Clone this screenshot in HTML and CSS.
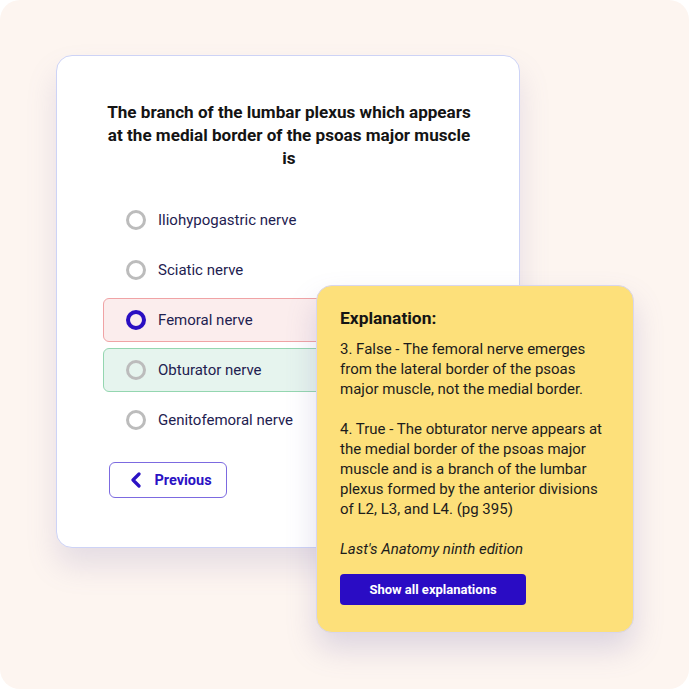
FILE: index.html
```html
<!DOCTYPE html>
<html>
<head>
<meta charset="utf-8">
<link rel="stylesheet" href="styles.css">
</head>
<body>
<div class="frame">
  <div class="quiz-card">
    <h1 class="question">The branch of the lumbar plexus which appears at the medial border of the psoas major muscle is</h1>
    <ul class="options">
      <li class="option"><span class="radio"></span><span class="label">Iliohypogastric nerve</span></li>
      <li class="option"><span class="radio"></span><span class="label">Sciatic nerve</span></li>
      <li class="option wrong"><span class="radio selected"></span><span class="label">Femoral nerve</span></li>
      <li class="option right"><span class="radio"></span><span class="label">Obturator nerve</span></li>
      <li class="option"><span class="radio"></span><span class="label">Genitofemoral nerve</span></li>
    </ul>
    <button class="prev-btn">
      <svg width="12" height="16" viewBox="0 0 12 16"><path d="M9 2 L3 8 L9 14" fill="none" stroke="#2b12c4" stroke-width="3.2" stroke-linecap="round" stroke-linejoin="round"/></svg>
      <span>Previous</span>
    </button>
  </div>
  <div class="explain-card">
    <h2 class="explain-title">Explanation:</h2>
    <p class="explain-text">3. False - The femoral nerve emerges from the lateral border of the psoas major muscle, not the medial border.</p>
    <p class="explain-text">4. True - The obturator nerve appears at the medial border of the psoas major muscle and is a branch of the lumbar plexus formed by the anterior divisions of L2, L3, and L4. (pg 395)</p>
    <p class="explain-text source">Last's Anatomy ninth edition</p>
    <button class="show-btn">Show all explanations</button>
  </div>
</div>
</body>
</html>
```

FILE: styles.css
```css
html, body {
  margin: 0;
  padding: 0;
  background: #ffffff;
}

body {
  font-family: Roboto, "Liberation Sans", sans-serif;
}

.frame {
  position: relative;
  width: 689px;
  height: 689px;
  box-sizing: border-box;
  background: #fdf5f0;
  border-radius: 20px;
  padding: 55px 0 0 56px;
}

.quiz-card {
  width: 464px;
  height: 493px;
  box-sizing: border-box;
  background: #ffffff;
  border: 1px solid #cdd3f6;
  border-radius: 16px;
  box-shadow: 0 18px 30px rgba(120, 110, 170, 0.18);
  padding: 45px 46px 0 46px;
}

.question {
  margin: 0 auto;
  width: 372px;
  text-align: center;
  font-size: 17.1px;
  line-height: 23px;
  font-weight: 700;
  color: #141414;
}

.options {
  list-style: none;
  margin: 28px 0 0 0;
  padding: 0;
  display: flex;
  flex-direction: column;
  gap: 6px;
}

.option {
  height: 44px;
  box-sizing: border-box;
  display: flex;
  align-items: center;
  gap: 12px;
  padding-left: 22px;
  border: 1px solid transparent;
  border-radius: 6px;
}

.option.wrong {
  background: #fbeded;
  border-color: #f0a3a5;
}

.option.right {
  background: #e6f4ee;
  border-color: #94d6b0;
}

.radio {
  width: 20px;
  height: 20px;
  box-sizing: border-box;
  border-radius: 50%;
  border: 3px solid #bcbcbc;
  flex: none;
}

.radio.selected {
  border: 4px solid #2a0fc2;
}

.label {
  font-size: 15px;
  color: #1e2150;
}

.prev-btn {
  margin: 20px 0 0 6px;
  width: 118px;
  height: 36px;
  box-sizing: border-box;
  border: 1.5px solid #7c6ae0;
  border-radius: 6px;
  background: #ffffff;
  display: flex;
  align-items: center;
  justify-content: center;
  gap: 12px;
  font-family: Roboto, "Liberation Sans", sans-serif;
  font-size: 14.5px;
  font-weight: 700;
  color: #2b12c4;
  padding: 0 0 0 6px;
}

.explain-card {
  position: absolute;
  left: 316px;
  top: 285px;
  width: 318px;
  height: 348px;
  box-sizing: border-box;
  background: #fde07a;
  border: 1px solid #d8d6ee;
  border-radius: 16px;
  box-shadow: 0 16px 30px rgba(110, 100, 170, 0.22);
  padding: 20px 28px 0 23px;
}

.explain-title {
  margin: 0;
  font-size: 17.4px;
  line-height: 24px;
  font-weight: 700;
  color: #141414;
}

.explain-text {
  margin: 9px 0 20px 0;
  font-size: 15px;
  line-height: 20px;
  color: #1c1c1c;
}

.explain-text + .explain-text {
  margin-top: 0;
}

.explain-text.source {
  margin-top: 1px;
  font-style: italic;
  margin-bottom: 15px;
}

.show-btn {
  width: 186px;
  height: 31px;
  border: none;
  border-radius: 4px;
  background: #2a0cc4;
  color: #ffffff;
  font-family: Roboto, "Liberation Sans", sans-serif;
  font-size: 13px;
  font-weight: 700;
}
```
